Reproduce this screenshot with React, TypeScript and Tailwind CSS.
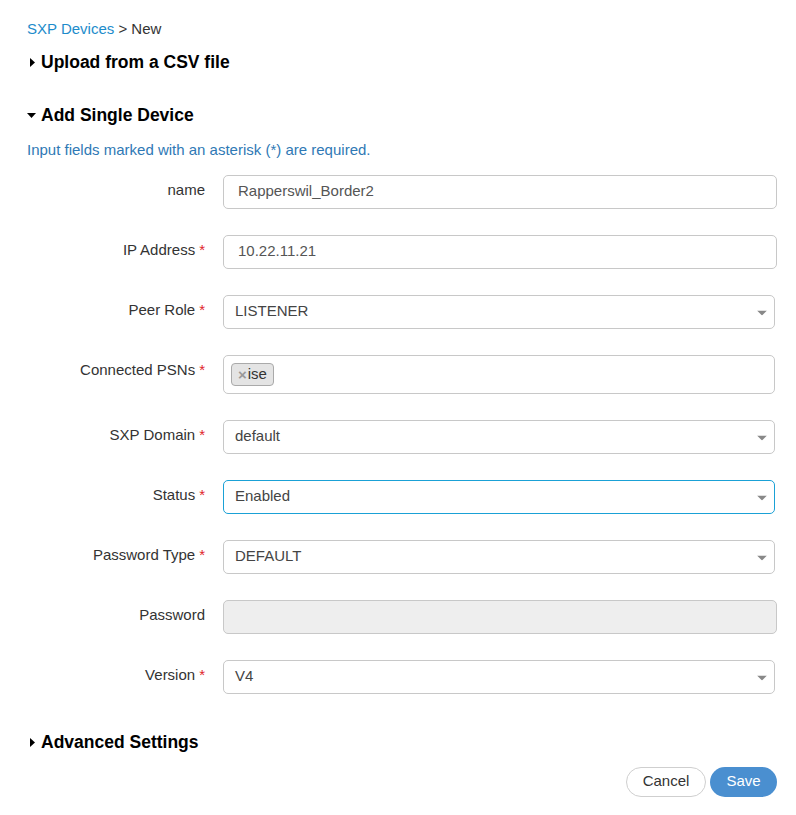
import React from 'react';

type Field = {
  label: string;
  required?: boolean;
  kind: 'text' | 'select' | 'tags' | 'disabled';
  value?: string;
  focused?: boolean;
};

const fields: Field[] = [
  { label: 'name', kind: 'text', value: 'Rapperswil_Border2' },
  { label: 'IP Address', required: true, kind: 'text', value: '10.22.11.21' },
  { label: 'Peer Role', required: true, kind: 'select', value: 'LISTENER' },
  { label: 'Connected PSNs', required: true, kind: 'tags' },
  { label: 'SXP Domain', required: true, kind: 'select', value: 'default' },
  { label: 'Status', required: true, kind: 'select', value: 'Enabled', focused: true },
  { label: 'Password Type', required: true, kind: 'select', value: 'DEFAULT' },
  { label: 'Password', kind: 'disabled' },
  { label: 'Version', required: true, kind: 'select', value: 'V4' },
];

const Caret = ({ open }: { open?: boolean }) =>
  open ? (
    <svg width="9" height="5" viewBox="0 0 9 5" className="mr-[5px] mt-[1px]">
      <path d="M0 0 L9 0 L4.5 5 Z" fill="#000" />
    </svg>
  ) : (
    <svg width="5" height="9" viewBox="0 0 5 9" className="ml-[3px] mr-[6px]">
      <path d="M0 0 L5 4.5 L0 9 Z" fill="#000" />
    </svg>
  );

const SelectArrow = () => (
  <svg width="10" height="5" viewBox="0 0 10 5" className="absolute right-[7px] top-1/2 -translate-y-1/2 mt-[1px]">
    <path d="M0 0 L10 0 L5 5 Z" fill="#888" />
  </svg>
);

function Control({ f }: { f: Field }) {
  if (f.kind === 'text') {
    return (
      <div className="h-[34px] w-[554px] rounded-[5px] border border-[#c8c8c8] bg-white pl-[14px] pb-[2px] flex items-center text-[15px] text-[#555]">
        {f.value}
      </div>
    );
  }
  if (f.kind === 'disabled') {
    return <div className="h-[34px] w-[554px] rounded-[5px] border border-[#c8c8c8] bg-[#eeeeee]" />;
  }
  if (f.kind === 'tags') {
    return (
      <div className="h-[39px] w-[552px] rounded-[5px] border border-[#c8c8c8] bg-white pl-[7px] pt-[7px]">
        <span className="inline-flex items-center h-[23px] rounded-[4px] border border-[#aaa] bg-[#e4e4e4] pl-[6px] pr-[6px] text-[15px] text-[#333]">
          <span className="text-[#999] text-[15px] font-bold mr-[1px] leading-none">×</span>ise
        </span>
      </div>
    );
  }
  return (
    <div
      className={`relative h-[34px] w-[552px] rounded-[5px] border bg-white pl-[11px] pb-[1px] flex items-center text-[15px] text-[#444] ${
        f.focused ? 'border-[#1aa1d6]' : 'border-[#c8c8c8]'
      }`}
    >
      {f.value}
      <SelectArrow />
    </div>
  );
}

export default function App() {
  return (
    <div
      className="w-[796px] h-[815px] bg-white pl-[27px] pr-[19px] text-[#333]"
      style={{ fontFamily: '"Liberation Sans", Arial, sans-serif' }}
    >
      <div className="pt-[19px] text-[15px] leading-[20px]">
        <span className="text-[#1d8ccb]">SXP Devices</span>
        <span className="text-[#333]"> &gt; New</span>
      </div>

      <div className="mt-[11px] flex items-center text-[17.5px] leading-[24px] font-bold text-black">
        <Caret />
        Upload from a CSV file
      </div>

      <div className="mt-[29px] flex items-center text-[17.5px] leading-[24px] font-bold text-black">
        <Caret open />
        Add Single Device
      </div>

      <div className="mt-[13px] text-[15px] leading-[20px] text-[#2f79b5]">
        Input fields marked with an asterisk (*) are required.
      </div>

      <div className="mt-[15px] flex flex-col gap-[26px]">
        {fields.map((f) => (
          <div key={f.label} className="flex items-start">
            <div className="w-[178px] pt-[5px] text-right text-[15px] leading-[20px] text-[#333]">
              {f.label}
              {f.required && <span className="text-[#e0242b] ml-[4px]">*</span>}
            </div>
            <div className="ml-[18px]">
              <Control f={f} />
            </div>
          </div>
        ))}
      </div>

      <div className="mt-[36px] flex items-center text-[17.5px] leading-[24px] font-bold text-black">
        <Caret />
        Advanced Settings
      </div>

      <div className="mt-[13px] flex justify-end gap-[4px]">
        <button className="h-[30px] w-[80px] rounded-full border border-[#cfcfcf] bg-white pb-[1px] text-[15px] text-[#333]">
          Cancel
        </button>
        <button className="h-[30px] w-[67px] rounded-full bg-[#4a8fd0] pb-[1px] text-[15px] text-white">
          Save
        </button>
      </div>
    </div>
  );
}
